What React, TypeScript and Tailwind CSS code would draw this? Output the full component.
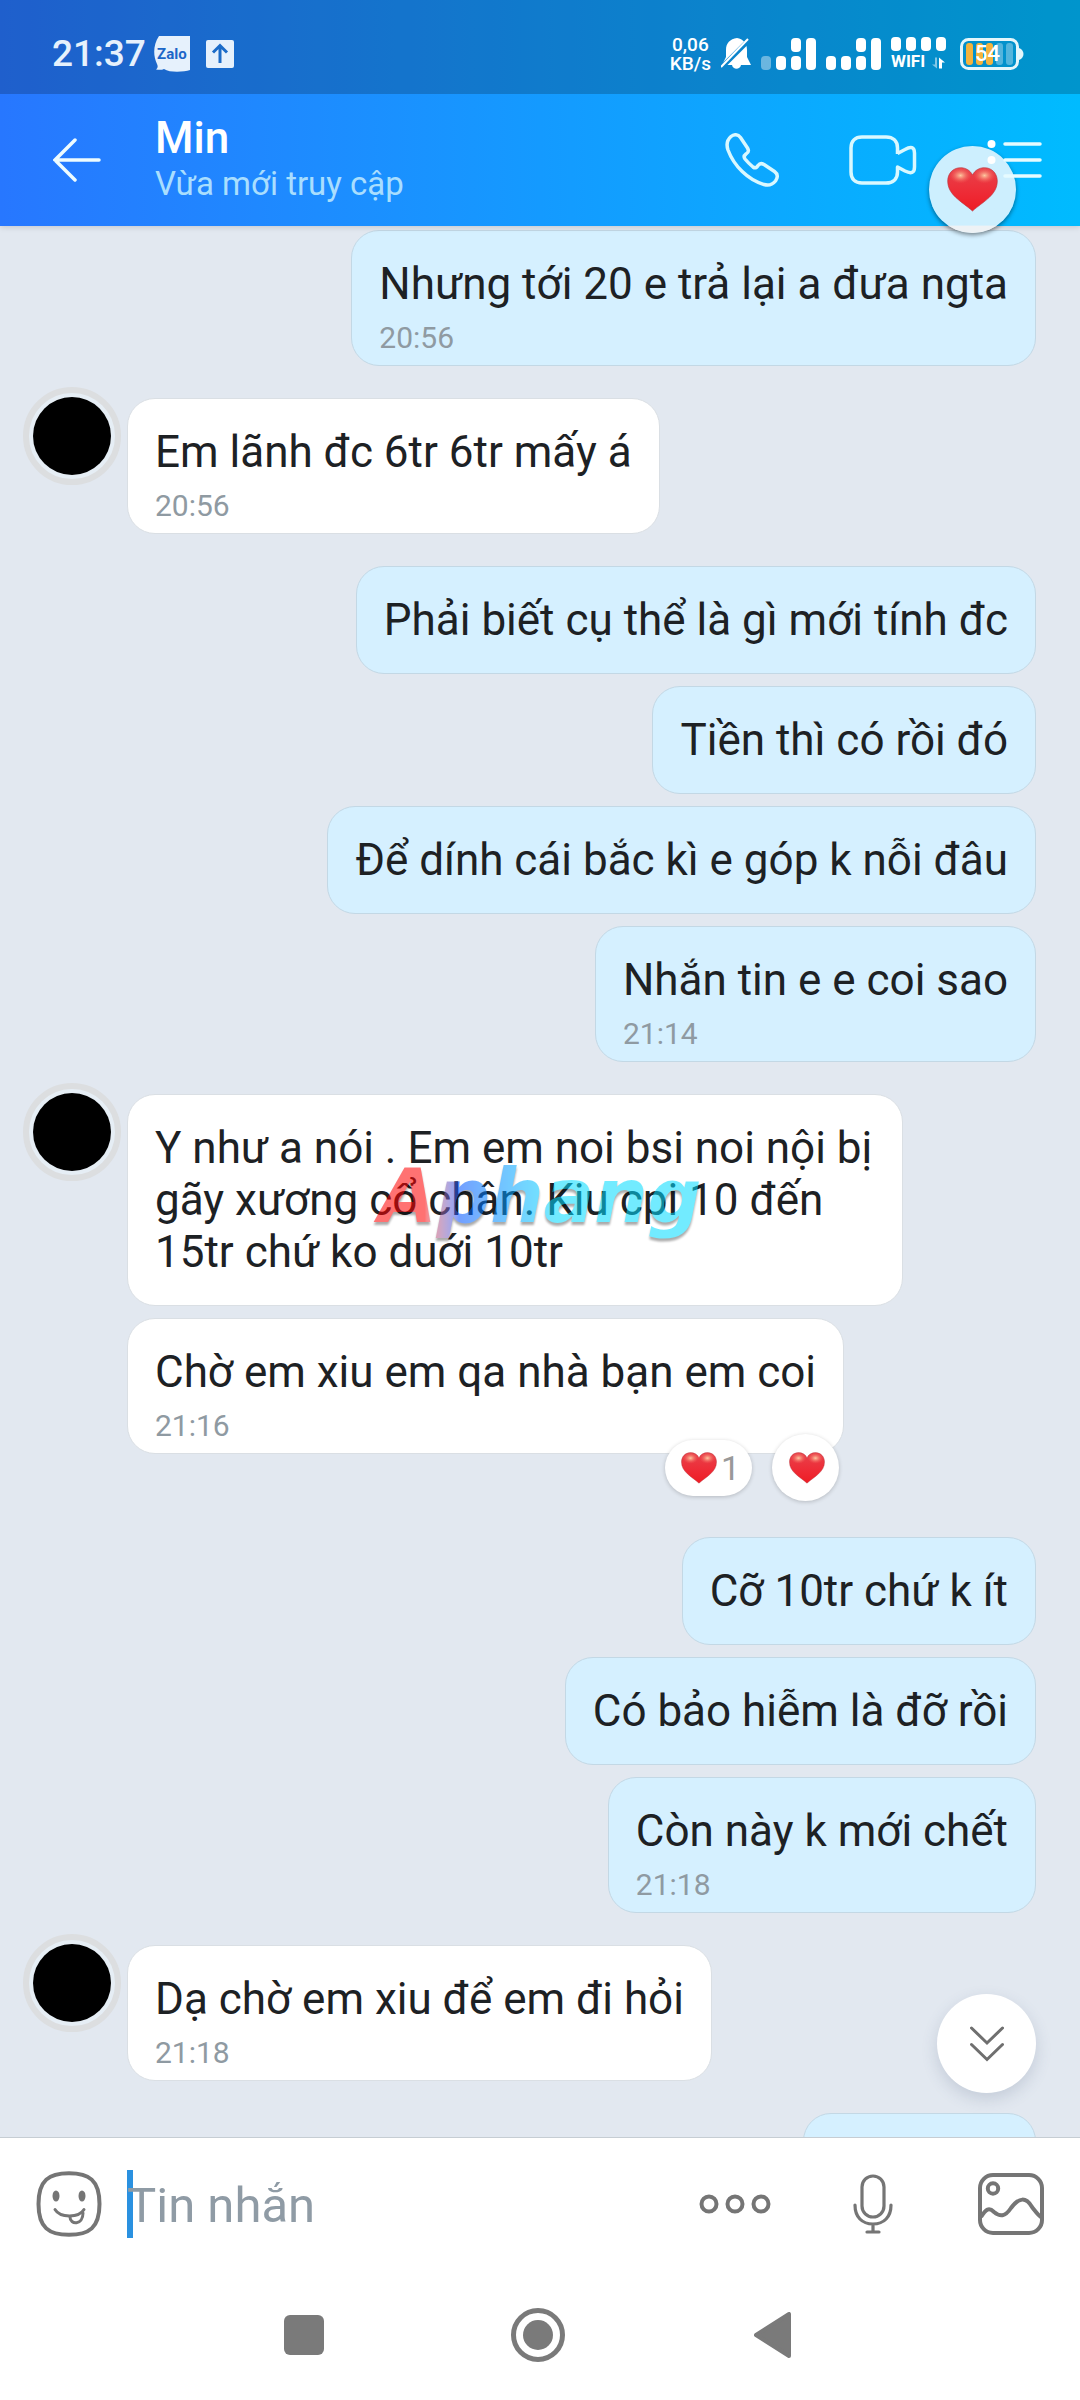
import { useId, useState } from "react";
import clsx from "clsx";

type Message = {
  id: number;
  text: string;
  time?: string;
  reactions?: number;
};

type MessageGroup = {
  id: number;
  mine: boolean;
  messages: Message[];
};

const GROUPS: MessageGroup[] = [
  {
    id: 1,
    mine: true,
    messages: [
      { id: 1, text: "Nhưng tới 20 e trả lại a đưa ngta", time: "20:56" },
    ],
  },
  {
    id: 2,
    mine: false,
    messages: [{ id: 2, text: "Em lãnh đc 6tr 6tr mấy á", time: "20:56" }],
  },
  {
    id: 3,
    mine: true,
    messages: [
      { id: 3, text: "Phải biết cụ thể là gì mới tính đc" },
      { id: 4, text: "Tiền thì có rồi đó" },
      { id: 5, text: "Để dính cái bắc kì e góp k nỗi đâu" },
      { id: 6, text: "Nhắn tin e e coi sao", time: "21:14" },
    ],
  },
  {
    id: 4,
    mine: false,
    messages: [
      {
        id: 7,
        text: "Y như a nói . Em em noi bsi noi nội bị gãy xương cổ chân. Kiu cpi 10 đến 15tr chứ ko duới 10tr",
      },
      {
        id: 8,
        text: "Chờ em xiu em qa nhà bạn em coi",
        time: "21:16",
        reactions: 1,
      },
    ],
  },
  {
    id: 5,
    mine: true,
    messages: [
      { id: 9, text: "Cỡ 10tr chứ k ít" },
      { id: 10, text: "Có bảo hiễm là đỡ rồi" },
      { id: 11, text: "Còn này k mới chết", time: "21:18" },
    ],
  },
  {
    id: 6,
    mine: false,
    messages: [{ id: 12, text: "Dạ chờ em xiu để em đi hỏi", time: "21:18" }],
  },
];

const Heart = ({ className }: { className?: string }) => {
  const id = useId();
  return (
    <svg viewBox="0 0 51 45" className={className} aria-hidden="true">
      <defs>
        <linearGradient id={`${id}-b`} x1="0" y1="0" x2="0" y2="1">
          <stop offset="0" stopColor="#e8434c" />
          <stop offset="0.6" stopColor="#ee2a35" />
          <stop offset="1" stopColor="#ee1c24" />
        </linearGradient>
        <radialGradient id={`${id}-g`}>
          <stop offset="0" stopColor="#ffd2a6" stopOpacity="0.95" />
          <stop offset="1" stopColor="#f5605a" stopOpacity="0" />
        </radialGradient>
      </defs>
      <path
        d="M25.500 8C23 3 18.500.7 13.500.7 6 .7.7 6.500.7 14c0 14 14 20.500 24.800 30C36.300 34.500 50.300 28 50.300 14 50.300 6.500 45 .7 37.500.7 32.500.7 28 3 25.500 8Z"
        fill={`url(#${id}-b)`}
        stroke="#b5363d"
        strokeOpacity="0.6"
      />
      <ellipse cx="13.500" cy="8.500" rx="11" ry="8" fill={`url(#${id}-g)`} />
      <ellipse cx="37.500" cy="8.500" rx="11" ry="8" fill={`url(#${id}-g)`} />
    </svg>
  );
};

const SignalIcon = ({ weak }: { weak?: boolean }) => (
  <svg viewBox="0 0 55 32" className="h-8 w-[55px]" fill="#fff">
    <rect y="18" width="10" height="14" rx="4" opacity={weak ? 0.4 : 1} />
    <rect x="15" y="18" width="10" height="14" rx="4" />
    <rect x="30" y="18" width="10" height="14" rx="4" />
    <rect x="30" width="10" height="14" rx="4" />
    <rect x="45" width="10" height="32" rx="4" />
  </svg>
);

const StatusBar = () => (
  <div className="flex h-[94px] items-center justify-between bg-black/20 pt-3.5 pr-14 pl-[52px] text-white">
    <div className="flex items-center text-[#e6f1fc]">
      <span className="text-[37px] leading-[44px] font-medium">21:37</span>
      <div className="relative ml-2 flex h-9 w-9 items-center justify-center">
        <svg viewBox="0 0 36 36" className="absolute inset-0" fill="#e6f1fc">
          <path d="M5 0H36V34C30 36 16 37 10 33 8 34 5 34 2 33.500 4 32 4 30 3 28-1 20-1 9 5 0Z" />
        </svg>
        <span className="relative text-[15px] leading-4 font-bold text-[#1c66c8]">
          Zalo
        </span>
      </div>
      <svg viewBox="0 0 28 28" className="ml-4 h-7 w-7">
        <rect width="28" height="28" rx="2" fill="#e6f1fc" />
        <path
          d="M14 23V6M7 12.500l7-7 7 7"
          fill="none"
          stroke="#1c6cc8"
          strokeWidth="3"
        />
      </svg>
    </div>
    <div className="flex items-center gap-2.5">
      <div className="flex flex-col items-center text-[19px] leading-[19px] font-medium">
        <span>0,06</span>
        <span>KB/s</span>
      </div>
      <svg viewBox="0 0 30 32" className="h-8 w-[30px]">
        <path
          d="M16 0C9 1 5 5 5 12v7L1 27h10c1 5 8 5 9 0h10l-4-8v-7C26 5 22 1 16 0Z"
          fill="#fff"
        />
        <path d="M-1 31 28 2" stroke="#0a84cc" strokeWidth="5" />
        <path d="M0 29 27 1" stroke="#fff" strokeWidth="2" />
      </svg>
      <SignalIcon weak />
      <SignalIcon />
      <div className="flex flex-col justify-between">
        <svg viewBox="0 0 55 14" className="h-3.5 w-[55px]" fill="#fff">
          <rect width="10" height="14" rx="4" />
          <rect x="15" width="10" height="14" rx="4" />
          <rect x="30" width="10" height="14" rx="4" />
          <rect x="45" width="10" height="14" rx="4" />
        </svg>
        <div className="flex items-end justify-between">
          <span className="text-[17px] leading-5 font-bold">WIFI</span>
          <svg viewBox="0 0 14 11" className="h-4 w-3.5">
            <path d="M5 0v11L0 7h3V0Z" fill="#fff" opacity="0.5" />
            <path d="M7 11V0l6 5H10v6Z" fill="#fff" />
          </svg>
        </div>
      </div>
      <div className="relative ml-1 flex h-8 w-16 items-center">
        <svg viewBox="0 0 64 32" className="absolute inset-0">
          <rect
            x="1.500"
            y="1.500"
            width="56"
            height="29"
            rx="7"
            fill="none"
            stroke="#e4f6fb"
            strokeWidth="3"
          />
          <path d="M59 10c6 2 6 10 0 12Z" fill="#e4f6fb" />
          <g fill="#f3b33d">
            <rect x="6" y="5" width="7" height="22" rx="3" />
            <rect x="16" y="5" width="7" height="22" rx="3" />
            <rect x="26" y="5" width="7" height="22" rx="3" />
          </g>
          <g fill="#fff" opacity="0.32">
            <rect x="36" y="5" width="7" height="22" rx="3" />
            <rect x="46" y="5" width="7" height="22" rx="3" />
          </g>
        </svg>
        <span className="relative w-[55px] text-center text-[22px] leading-8 font-medium">
          54
        </span>
      </div>
    </div>
  </div>
);

const ChatHeader = () => (
  <div className="relative flex h-[132px] items-center pr-[38px] pl-[53px]">
    {/* floating reaction, the menu icon stays above it */}
    <div className="absolute top-[52px] right-16 flex h-[87px] w-[87px] items-center justify-center rounded-full bg-linear-to-b from-[#cdeffe] from-91% to-[#eef2f5] to-92% shadow-[0_2px_4px_rgba(0,0,0,0.45)]">
      <Heart className="h-[45px] w-[51px]" />
    </div>
    <button type="button" aria-label="Quay lại" className="mr-[54px]">
      <svg
        viewBox="0 0 48 44"
        className="h-11 w-12"
        fill="none"
        stroke="#eefcff"
        strokeWidth="3.500"
        strokeLinecap="round"
      >
        <path d="M46 22H2M22 2 2 22 22 42" />
      </svg>
    </button>
    <div className="flex flex-1 flex-col pb-1">
      <h1 className="text-[44px] leading-[52px] font-medium text-white">Min</h1>
      <p className="text-[33px] leading-10 text-[#a9defe]">Vừa mới truy cập</p>
    </div>
    <div className="relative flex items-center gap-[70px]">
      <button type="button" aria-label="Gọi thoại">
        <svg
          viewBox="0 0 54 54"
          className="h-[54px] w-[54px]"
          fill="none"
          stroke="#d9f8ff"
          strokeWidth="3.500"
          strokeLinejoin="round"
        >
          <path d="M15.500 4.500C13 1 9 1 6 3.500 2 7 1 11 3 17 9 33 23 47 39 51.500 44 53 48 51 50.500 48 53 44.500 53 41 49.500 38.500L39 31.500C36.500 30 34.500 30.500 33 32.500 31.500 35 30 35.500 28 34 25 31.500 22.500 29 20 26 18.500 24 19 22.500 21 21 23.500 19.500 24 17.500 22.500 15Z" />
        </svg>
      </button>
      <button type="button" aria-label="Gọi video">
        <svg
          viewBox="0 0 68 50"
          className="h-[50px] w-[68px]"
          fill="none"
          stroke="#d9f8ff"
          strokeWidth="3.500"
          strokeLinejoin="round"
        >
          <path d="M48.500 19V13C48.500 6 44 2 37 2H13C6 2 2 6 2 13V37C2 44 6 48 13 48H37C44 48 48.500 44 48.500 37V32L56 36C62 39 65.500 38 65.500 32V18C65.500 12 62 11 56 14.500L48.500 18.500" />
        </svg>
      </button>
      <button type="button" aria-label="Tùy chọn">
        <svg
          viewBox="0 0 55 42"
          className="h-[42px] w-[55px]"
          stroke="#e6fbff"
          strokeWidth="3.500"
          strokeLinecap="round"
        >
          <path d="M18 5H53M18 21H53M18 37H53" />
          <circle cx="4.500" cy="5" r="4" fill="#fff" stroke="none" />
          <circle cx="4.500" cy="21" r="4" fill="#fff" stroke="none" />
        </svg>
      </button>
    </div>
  </div>
);

const Avatar = () => (
  <div className="-mt-[11px] flex h-[98px] w-[98px] shrink-0 items-center justify-center rounded-full border-[6px] border-[#dcdee0] bg-[#e6eef5]">
    <div className="h-[78px] w-[78px] rounded-full bg-black" />
  </div>
);

const Reactions = ({ count }: { count: number }) => (
  <div className="absolute right-1 -bottom-12 flex items-center gap-5">
    <button
      type="button"
      className="flex h-14 w-[87px] items-center justify-center gap-1 rounded-full bg-white pl-1 text-[34px] leading-10 text-[#999] shadow-[0_1px_4px_rgba(0,0,0,0.2)]"
    >
      <Heart className="h-8 w-9" />
      {count}
    </button>
    <button
      type="button"
      aria-label="Thả tim"
      className="flex h-[67px] w-[67px] items-center justify-center rounded-full bg-white pl-0.5 shadow-[0_1px_4px_rgba(0,0,0,0.2)]"
    >
      <Heart className="h-8 w-9" />
    </button>
  </div>
);

const Bubble = ({ message, mine }: { message: Message; mine: boolean }) => (
  <li
    className={clsx(
      "relative max-w-[776px] rounded-[28px] border px-[27px] pt-[27px]",
      mine ? "border-[#c3d8e5] bg-[#d5f0ff]" : "border-[#dadfe4] bg-white",
      message.time ? "pb-[7px]" : "pb-[27px]",
      message.reactions && "mb-[51px]",
    )}
  >
    <p className="text-[44px] leading-[52px] text-[#1d2124]">{message.text}</p>
    {message.time && (
      <time className="mt-2 block text-[30px] leading-10 text-[#8f9aa2]">
        {message.time}
      </time>
    )}
    {message.reactions && <Reactions count={message.reactions} />}
  </li>
);

const MessageList = () => (
  <div className="flex h-full flex-col gap-8 overflow-y-auto pt-1 pr-11 pl-[23px] [scrollbar-width:none]">
    {GROUPS.map(group => (
      <section
        key={group.id}
        className={clsx("flex shrink-0 gap-1.5", group.mine && "justify-end")}
      >
        {!group.mine && <Avatar />}
        <ul
          className={clsx(
            "flex flex-col gap-3",
            group.mine ? "items-end" : "items-start",
          )}
        >
          {group.messages.map(message => (
            <Bubble key={message.id} message={message} mine={group.mine} />
          ))}
        </ul>
      </section>
    ))}
    {/* next message, still below the fold */}
    <div className="h-[108px] w-[233px] shrink-0 self-end rounded-[28px] border border-[#c3d8e5] bg-[#d5f0ff]" />
  </div>
);

const Composer = () => {
  const [draft, setDraft] = useState("");

  return (
    <form
      className="flex h-[133px] items-center border-t border-[#c6cdd3] bg-white px-9"
      onSubmit={e => e.preventDefault()}
    >
      <button type="button" aria-label="Nhãn dán">
        <svg
          viewBox="0 0 66 66"
          className="h-[66px] w-[66px]"
          fill="none"
          stroke="#757575"
          strokeWidth="4"
          strokeLinecap="round"
        >
          <path d="M33 2.200C53 2.200 63.500 9 63.500 33S53 63.800 33 63.800 2.500 57 2.500 33 13 2.200 33 2.200Z" />
          <ellipse cx="20" cy="25" rx="3.500" ry="5.500" fill="#757575" stroke="none" />
          <ellipse cx="46" cy="25" rx="3.500" ry="5.500" fill="#757575" stroke="none" />
          <path d="M19 38.500C24 47 43 47 48 38.500" strokeWidth="3" />
          <path d="M34 46C34 54 47 54.500 47 42" strokeWidth="3" />
        </svg>
      </button>
      <div className="relative ml-[25px] flex-1">
        {!draft && (
          <span className="absolute inset-y-0 left-0 w-1.5 bg-[#2a91e0]" />
        )}
        <input
          type="text"
          aria-label="Tin nhắn"
          placeholder="Tin nhắn"
          value={draft}
          onChange={e => setDraft(e.target.value)}
          className="relative block h-[68px] w-full pt-0.5 text-[49px] leading-[66px] text-[#1d2124] caret-[#2a91e0] outline-none placeholder:text-[#8f9ba5]"
        />
      </div>
      <div className="flex items-center">
        <button type="button" aria-label="Thêm" className="mr-[82px]">
          <svg
            viewBox="0 0 72 20"
            className="h-5 w-[72px]"
            fill="none"
            stroke="#757575"
            strokeWidth="4"
          >
            <circle cx="10" cy="10" r="7.500" />
            <circle cx="36" cy="10" r="7.500" />
            <circle cx="62" cy="10" r="7.500" />
          </svg>
        </button>
        <button type="button" aria-label="Ghi âm" className="mr-[85px]">
          <svg
            viewBox="0 0 40 60"
            className="h-[60px] w-10"
            fill="none"
            stroke="#757575"
            strokeWidth="3.200"
            strokeLinecap="round"
          >
            <rect x="9" y="2" width="22" height="41" rx="11" />
            <path d="M2 31C2 43 9 50 20 50S38 43 38 31M20 50V58M14 58H26" />
          </svg>
        </button>
        <button type="button" aria-label="Gửi ảnh">
          <svg
            viewBox="0 0 66 62"
            className="h-[62px] w-[66px]"
            fill="none"
            stroke="#757575"
            strokeWidth="4"
          >
            <rect x="2" y="2" width="62" height="58" rx="13" />
            <circle cx="15" cy="15.500" r="5.200" />
            <path d="M3 44C8 36 11 34 16 39 22 44 27 44 33 35 41 24 48 24 54 34 58 39 60 42 63 44" />
          </svg>
        </button>
      </div>
    </form>
  );
};

const NavigationBar = () => (
  <nav className="flex h-[130px] items-center justify-center bg-white pr-1">
    <button
      type="button"
      aria-label="Gần đây"
      className="flex w-[234px] justify-center"
    >
      <span className="h-10 w-10 rounded-md bg-[#7a7a7a]" />
    </button>
    <button
      type="button"
      aria-label="Màn hình chính"
      className="flex w-[234px] justify-center"
    >
      <span className="flex h-[54px] w-[54px] items-center justify-center rounded-full border-[5px] border-[#7a7a7a]">
        <span className="h-[30px] w-[30px] rounded-full bg-[#7a7a7a]" />
      </span>
    </button>
    <button
      type="button"
      aria-label="Trở về"
      className="flex w-[234px] justify-center"
    >
      <svg viewBox="0 0 37 46" className="h-[46px] w-[37px]">
        <path
          d="M2 23 35 2V44Z"
          fill="#7a7a7a"
          stroke="#7a7a7a"
          strokeWidth="4"
          strokeLinejoin="round"
        />
      </svg>
    </button>
  </nav>
);

export default function App() {
  return (
    <div className="relative flex h-screen flex-col overflow-hidden bg-[#e2e8f0] font-['Roboto',sans-serif]">
      <header className="relative z-10 bg-linear-to-r from-[#2777ff] via-[#149aff] to-[#00bbff] shadow-[0_1px_6px_rgba(0,0,0,0.15)]">
        <StatusBar />
        <ChatHeader />
      </header>

      <main className="relative min-h-0 flex-1">
        <MessageList />
        <button
          type="button"
          aria-label="Xuống cuối"
          className="absolute right-11 bottom-11 flex h-[99px] w-[99px] items-center justify-center rounded-full bg-white shadow-[0_6px_16px_rgba(60,80,110,0.18)]"
        >
          <svg
            viewBox="0 0 34 36"
            className="h-9 w-[34px]"
            fill="none"
            stroke="#6f6f6f"
            strokeWidth="3"
            strokeLinecap="round"
          >
            <path d="M1.500 2 17 17 32.500 2M1.500 18.500 17 33.500 32.500 18.500" />
          </svg>
        </button>
      </main>

      <Composer />
      <NavigationBar />

      {/* watermark */}
      <div className="pointer-events-none absolute inset-0 z-20 flex items-center justify-center pb-2 opacity-55">
        <span className="bg-linear-to-r from-[#ff0000] from-16% via-[#0050ff] via-26% to-[#00dcff] to-55% bg-clip-text px-2 font-['DejaVu_Sans',sans-serif] text-[75px] leading-[96px] font-bold text-transparent italic drop-shadow-[0_3px_1px_rgba(0,0,0,0.6)]">
          Aphang
        </span>
      </div>
    </div>
  );
}
